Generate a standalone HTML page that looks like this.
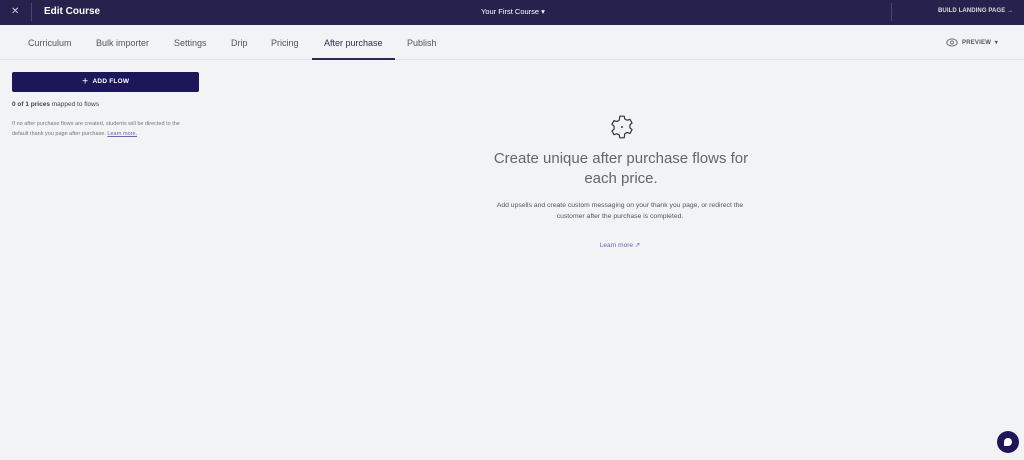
<!DOCTYPE html>
<html><head><style>
*{margin:0;padding:0;box-sizing:border-box}
body{width:1024px;height:460px;background:#f2f3f5;font-family:"Liberation Sans",sans-serif;position:relative;overflow:hidden;color:#333}
.top{position:absolute;top:0;left:0;width:1024px;height:25px;background:#25224d;color:#fff}
.top .x{position:absolute;left:11px;top:6px;font-size:10px;color:#ccc}
.top .sep{position:absolute;left:31px;top:3px;width:1px;height:18px;background:#4a4770}
.top .t{position:absolute;left:44px;top:6px;font-size:10px;font-weight:bold}
.top .c{position:absolute;left:481px;top:7px;font-size:7.5px}
.top .sep2{position:absolute;left:891px;top:3px;width:1px;height:18px;background:#4a4770}
.top .b{position:absolute;left:938px;top:8px;font-size:6px;font-weight:bold;letter-spacing:.1px;color:#ddd;white-space:nowrap}
.tabs{position:absolute;top:25px;left:0;width:1024px;height:35px;border-bottom:1px solid #e2e3e6;background:#f2f3f5}
.tab{position:absolute;top:13px;font-size:9px;color:#555}
.tab.a{color:#2d2a5a}
.ul{position:absolute;left:312px;top:33px;width:83px;height:2px;background:#2d2a5a}
.pv{position:absolute;left:948px;top:14px;font-size:6px;font-weight:bold;color:#555;letter-spacing:.2px}
.btn{position:absolute;left:12px;top:72px;width:187px;height:20px;background:#1c1758;border-radius:2px;color:#fff;font-size:6.5px;font-weight:bold;text-align:center;line-height:20px;letter-spacing:.2px}
.m{position:absolute;left:12px;top:101px;font-size:6.5px;color:#444}
.s{position:absolute;left:12px;top:119px;font-size:5.5px;color:#777;line-height:10px;width:180px}
.s u{color:#6a66b0}
.h{position:absolute;left:480px;top:149px;width:282px;text-align:center;font-size:15px;color:#666;line-height:20px}
.p{position:absolute;left:482px;top:200px;width:276px;text-align:center;font-size:6.8px;color:#555;line-height:11px}
.l{position:absolute;left:470px;top:241px;width:300px;text-align:center;font-size:6.5px;color:#6a66b0}
.chat{position:absolute;left:997px;top:431px;width:22px;height:22px;border-radius:50%;background:#1c1758}
.chat i{position:absolute;left:7px;top:7px;width:8px;height:8px;background:#fff;border-radius:50% 50% 50% 0}
</style></head><body>
<div class="top"><span class="x">✕</span><div class="sep"></div><span class="t">Edit Course</span><span class="c">Your First Course ▾</span><div class="sep2"></div><span class="b">BUILD LANDING PAGE →</span></div>
<div class="tabs">
<span class="tab" style="left:28px">Curriculum</span>
<span class="tab" style="left:96px">Bulk importer</span>
<span class="tab" style="left:174px">Settings</span>
<span class="tab" style="left:231px">Drip</span>
<span class="tab" style="left:271px">Pricing</span>
<span class="tab a" style="left:324px">After purchase</span>
<span class="tab" style="left:407px">Publish</span>
<div class="ul"></div>
<svg style="position:absolute;left:946px;top:13px" width="12" height="9" viewBox="0 0 12 9"><ellipse cx="6" cy="4.5" rx="5.2" ry="3.5" fill="none" stroke="#777" stroke-width="1"/><circle cx="6" cy="4.5" r="1.6" fill="none" stroke="#777"/></svg>
<span class="pv" style="left:962px">PREVIEW &nbsp;▾</span>
</div>
<div class="btn">＋&nbsp;&nbsp;ADD FLOW</div>
<div class="m"><b>0 of 1 prices</b> mapped to flows</div>
<div class="s">If no after purchase flows are created, students will be directed to the default thank you page after purchase. <u>Learn more.</u></div>
<svg style="position:absolute;left:609px;top:114px" width="26" height="26" viewBox="0 0 24 24"><path d="M10 2h4l.6 2.6 2.2 1.2 2.5-.9 2 3.4-2 1.8v2.6l2 1.8-2 3.4-2.5-.9-2.2 1.2L14 22h-4l-.6-2.6-2.2-1.2-2.5.9-2-3.4 2-1.8v-2.6l-2-1.8 2-3.4 2.5.9 2.2-1.2z" fill="none" stroke="#333" stroke-width="1.1" stroke-linejoin="round"/><circle cx="12" cy="12" r="0.9" fill="#333"/></svg>
<div class="h">Create unique after purchase flows for each price.</div>
<div class="p">Add upsells and create custom messaging on your thank you page, or redirect the customer after the purchase is completed.</div>
<div class="l">Learn more ↗</div>
<div class="chat"><i></i></div>
</body></html>
